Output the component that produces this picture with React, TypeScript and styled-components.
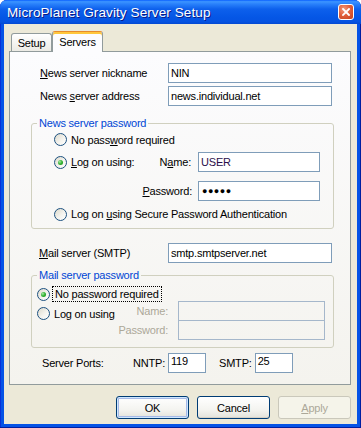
import React, { FC, ReactNode } from "react";
import styled, { createGlobalStyle } from "styled-components";

const GlobalStyle = createGlobalStyle`
  html, body {
    margin: 0;
    padding: 0;
    background: #ffffff;
  }
  body {
    width: 361px;
    height: 428px;
    overflow: hidden;
    font-family: "Liberation Sans", Arial, sans-serif;
    font-size: 11px;
    letter-spacing: -0.2px;
    color: #000000;
  }
`;

// Window frame
const Window = styled.div`
  box-sizing: border-box;
  width: 361px;
  height: 428px;
  display: flex;
  flex-direction: column;
  background: #0553e6;
  border-radius: 7px 7px 0 0;
  box-shadow: inset 0 -1px 0 #001ea0, inset 1px 0 0 #0831d9, inset -1px 0 0 #001ea0;
  overflow: hidden;
`;

const TitleBar = styled.div`
  height: 24px;
  flex: none;
  display: flex;
  align-items: center;
  justify-content: space-between;
  padding: 0 6px 0 7px;
  background: linear-gradient(
    #0a5fff 0%,
    #3c95ff 7%,
    #2a82fb 16%,
    #0d60ec 38%,
    #0557e6 70%,
    #0553e2 90%,
    #0449d2 100%
  );
`;

const TitleText = styled.span`
  color: #ffffff;
  font-size: 13.5px;
  letter-spacing: 0.1px;
  text-shadow: 1px 1px 0 #0a1a86;
  white-space: nowrap;
  margin-top: 1px;
`;

const CloseButton = styled.div`
  box-sizing: border-box;
  width: 16px;
  height: 16px;
  margin-right: 1px;
  border: 1px solid #ffffff;
  border-radius: 3px;
  background: radial-gradient(circle at 35% 30%, #f29a7c 0%, #e1603c 45%, #c3401c 100%);
  display: flex;
  align-items: center;
  justify-content: center;
`;

// Dialog body
const DialogBody = styled.div`
  flex: 1;
  margin: 0 4px 4px 4px;
  padding: 7px 6px 0 5px;
  background: #ece9d8;
  display: flex;
  flex-direction: column;
`;

const TabStrip = styled.div`
  height: 20px;
  display: flex;
  align-items: flex-end;
  padding-left: 2px;
`;

const Tab = styled.div<{ $active?: boolean; $width: number }>`
  box-sizing: border-box;
  width: ${(p) => p.$width}px;
  height: ${(p) => (p.$active ? 21 : 18)}px;
  margin-bottom: ${(p) => (p.$active ? -1 : 0)}px;
  position: relative;
  z-index: ${(p) => (p.$active ? 1 : 0)};
  border: 1px solid #919b9c;
  border-top-color: ${(p) => (p.$active ? "#e68b2c" : "#919b9c")};
  border-bottom: none;
  border-radius: 3px 3px 0 0;
  background: ${(p) => (p.$active ? "#fcfcfe" : "linear-gradient(#ffffff, #ecebe5)")};
  box-shadow: ${(p) => (p.$active ? "inset 0 2px 0 #ffc73c" : "none")};
  display: flex;
  align-items: center;
  justify-content: center;
  padding-top: ${(p) => (p.$active ? 0 : 1)}px;
  font-size: 11px;
`;

const TabPanel = styled.div`
  box-sizing: border-box;
  height: 334px;
  border: 1px solid #919b9c;
  background: linear-gradient(#fcfcfe, #f4f3ee);
  padding: 11px 16px 0 21px;
  display: flex;
  flex-direction: column;
`;

// Label + text box rows
const FieldRow = styled.div<{ $mt?: number }>`
  display: grid;
  grid-template-columns: 137px 164px;
  align-items: center;
  height: 20px;
  margin-top: ${(p) => p.$mt ?? 0}px;
`;

const FieldLabel = styled.span<{ $indent: number }>`
  padding-left: ${(p) => p.$indent}px;
  white-space: nowrap;
`;

const TextBox = styled.div<{ $disabled?: boolean; $width?: number; $alignTop?: boolean }>`
  box-sizing: border-box;
  height: 20px;
  width: ${(p) => (p.$width ? `${p.$width}px` : "100%")};
  border: 1px solid ${(p) => (p.$disabled ? "#a5b7cb" : "#7f9db9")};
  background: ${(p) => (p.$disabled ? "transparent" : "#ffffff")};
  padding: ${(p) => (p.$alignTop ? "1px 2px 0" : "0 2px")};
  display: flex;
  align-items: ${(p) => (p.$alignTop ? "flex-start" : "center")};
  white-space: nowrap;
  overflow: hidden;
`;

const PasswordDots = styled.span`
  font-size: 9px;
  letter-spacing: 0.5px;
  padding-left: 1px;
`;

// Group boxes
const GroupBox = styled.fieldset<{ $mt: number }>`
  margin: ${(p) => p.$mt}px 0 0;
  padding: 0;
  min-width: 0;
  border: 1px solid #d0d0bf;
  border-radius: 3px;
`;

const GroupLegend = styled.legend`
  margin-left: 5px;
  padding: 0 2px;
  color: #0046d5;
  font-size: 11px;
  line-height: 13px;
`;

const NewsGroupBody = styled.div`
  padding: 0 13px 4px 22px;
  display: flex;
  flex-direction: column;
`;

const MailGroupBody = styled.div`
  padding: 5px 8px 7px 5px;
  display: flex;
  flex-direction: column;
`;

const RadioLine = styled.div<{ $h: number; $mt?: number }>`
  display: flex;
  align-items: center;
  gap: 4px;
  height: ${(p) => p.$h}px;
  margin-top: ${(p) => p.$mt ?? 0}px;
  white-space: nowrap;
`;

const RadioCircle = styled.span<{ $checked?: boolean }>`
  box-sizing: border-box;
  flex: none;
  width: 13px;
  height: 13px;
  border-radius: 50%;
  border: 1px solid #1c5180;
  background: linear-gradient(135deg, #dcd9cb 0%, #f4f3ee 55%, #ffffff 100%);
  display: flex;
  align-items: center;
  justify-content: center;
  &::after {
    content: "";
    display: ${(p) => (p.$checked ? "block" : "none")};
    width: 5px;
    height: 5px;
    border-radius: 50%;
    background: radial-gradient(circle at 35% 35%, #a6e7a6 0%, #2fb12f 50%, #1d8c1d 100%);
  }
`;

const FocusText = styled.span`
  outline: 1px dotted #000000;
  outline-offset: 1px;
  padding: 0 1px;
`;

const CredRow = styled.div<{ $mt?: number; $inputWidth: number }>`
  display: grid;
  grid-template-columns: 1fr auto ${(p) => p.$inputWidth}px;
  align-items: center;
  height: 20px;
  margin-top: ${(p) => p.$mt ?? 0}px;
`;

const CredLabel = styled.span<{ $gap: number; $muted?: boolean }>`
  margin-right: ${(p) => p.$gap}px;
  text-align: right;
  color: ${(p) => (p.$muted ? "#aca899" : "#000000")};
`;

const MailCredGrid = styled.div`
  display: grid;
  grid-template-columns: 1fr auto 147px;
  grid-template-rows: 19px 20px;
  align-items: center;
`;

const GridRadio = styled(RadioLine)`
  align-self: end;
  height: 13px;
  margin-bottom: 0;
`;

// Server ports
const PortsRow = styled.div`
  display: flex;
  align-items: center;
  height: 20px;
  margin-top: 5px;
  padding-left: 11px;
`;

const PortsCaption = styled.span`
  width: 91px;
`;

const PortLabel = styled.span<{ $ml?: number }>`
  margin-left: ${(p) => p.$ml ?? 0}px;
  margin-right: 3px;
`;

// Dialog buttons
const ButtonBar = styled.div`
  display: flex;
  justify-content: flex-end;
  gap: 8px;
  margin-top: 11px;
`;

const DialogButton = styled.div<{ $kind: "default" | "normal" | "disabled" }>`
  box-sizing: border-box;
  width: 73px;
  height: 23px;
  border-radius: 3px;
  border: 1px solid ${(p) => (p.$kind === "disabled" ? "#cac8bb" : "#003c74")};
  background: ${(p) =>
    p.$kind === "disabled" ? "#f5f4ea" : "linear-gradient(#ffffff 0%, #f4f4f0 60%, #e3e2da 100%)"};
  box-shadow: ${(p) =>
    p.$kind === "default"
      ? "inset 0 0 0 1px #cee7ff, inset 0 0 0 2px #a6b9e6"
      : p.$kind === "normal"
      ? "inset 0 -1px 0 #d6d0c5"
      : "none"};
  color: ${(p) => (p.$kind === "disabled" ? "#aca899" : "#000000")};
  display: flex;
  align-items: center;
  justify-content: center;
  font-size: 11px;
`;

const Radio: FC<{ checked?: boolean; children: ReactNode; h: number; mt?: number }> = ({
  checked,
  children,
  h,
  mt,
}) => (
  <RadioLine $h={h} $mt={mt}>
    <RadioCircle $checked={checked} />
    <span>{children}</span>
  </RadioLine>
);

const App: FC = () => {
  return (
    <>
      <GlobalStyle />
      <Window>
        <TitleBar>
          <TitleText>MicroPlanet Gravity Server Setup</TitleText>
          <CloseButton>
            <svg width="8" height="8" viewBox="0 0 8 8">
              <path d="M1 1 L7 7 M7 1 L1 7" stroke="#ffffff" strokeWidth="1.8" strokeLinecap="square" />
            </svg>
          </CloseButton>
        </TitleBar>
        <DialogBody>
          <TabStrip>
            <Tab $width={41}>Setup</Tab>
            <Tab $width={51} $active>
              Servers
            </Tab>
          </TabStrip>
          <TabPanel>
            <FieldRow>
              <FieldLabel $indent={9}>
                <u>N</u>ews server nickname
              </FieldLabel>
              <TextBox>NIN</TextBox>
            </FieldRow>
            <FieldRow $mt={3}>
              <FieldLabel $indent={9}>
                News <u>s</u>erver address
              </FieldLabel>
              <TextBox>news.individual.net</TextBox>
            </FieldRow>

            <GroupBox $mt={11}>
              <GroupLegend>News server password</GroupLegend>
              <NewsGroupBody>
                <Radio h={19}>
                  No pass<u>w</u>ord required
                </Radio>
                <CredRow $mt={3} $inputWidth={122}>
                  <RadioLine $h={20}>
                    <RadioCircle $checked />
                    <span>
                      <u>L</u>og on using:
                    </span>
                  </RadioLine>
                  <CredLabel $gap={7}>
                    N<u>a</u>me:
                  </CredLabel>
                  <TextBox style={{ color: "#2b0f4a" }}>USER</TextBox>
                </CredRow>
                <CredRow $mt={9} $inputWidth={122}>
                  <span />
                  <CredLabel $gap={6}>
                    <u>P</u>assword:
                  </CredLabel>
                  <TextBox>
                    <PasswordDots>●●●●●</PasswordDots>
                  </TextBox>
                </CredRow>
                <Radio h={20} mt={3}>
                  Log on <u>u</u>sing Secure Password Authentication
                </Radio>
              </NewsGroupBody>
            </GroupBox>

            <FieldRow $mt={14}>
              <FieldLabel $indent={8}>
                <u>M</u>ail server (SMTP)
              </FieldLabel>
              <TextBox>smtp.smtpserver.net</TextBox>
            </FieldRow>

            <GroupBox $mt={6}>
              <GroupLegend>Mail server password</GroupLegend>
              <MailGroupBody>
                <RadioLine $h={14}>
                  <RadioCircle $checked />
                  <FocusText>No password required</FocusText>
                </RadioLine>
                <MailCredGrid>
                  <GridRadio $h={13}>
                    <RadioCircle />
                    <span>Log on using</span>
                  </GridRadio>
                  <CredLabel $gap={10} $muted>
                    Name:
                  </CredLabel>
                  <TextBox $disabled />
                  <span />
                  <CredLabel $gap={10} $muted>
                    Password:
                  </CredLabel>
                  <TextBox $disabled style={{ marginTop: -1 }} />
                </MailCredGrid>
              </MailGroupBody>
            </GroupBox>

            <PortsRow>
              <PortsCaption>Server Ports:</PortsCaption>
              <PortLabel>NNTP:</PortLabel>
              <TextBox $width={38} $alignTop>
                119
              </TextBox>
              <PortLabel $ml={13}>SMTP:</PortLabel>
              <TextBox $width={38} $alignTop>
                25
              </TextBox>
            </PortsRow>
          </TabPanel>
          <ButtonBar>
            <DialogButton $kind="default">OK</DialogButton>
            <DialogButton $kind="normal">Cancel</DialogButton>
            <DialogButton $kind="disabled">
              <span>
                <u>A</u>pply
              </span>
            </DialogButton>
          </ButtonBar>
        </DialogBody>
      </Window>
    </>
  );
};

export default App;
